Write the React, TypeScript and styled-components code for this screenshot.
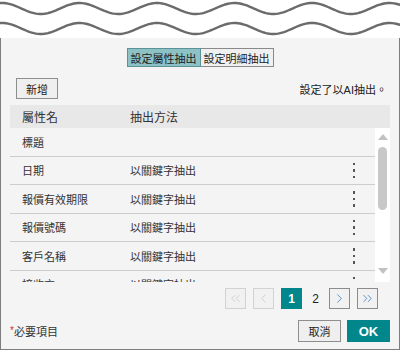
import styled, { createGlobalStyle } from "styled-components"
import { ChevronLeft, ChevronRight, ChevronsLeft, ChevronsRight } from "lucide-react"

const GlobalStyle = createGlobalStyle`
  html, body {
    margin: 0;
    padding: 0;
    background: #ffffff;
  }
  body {
    font-family: "Liberation Sans", "Noto Sans CJK TC", sans-serif;
    color: #222;
  }
`

const rows = [
  { name: "標題", method: "" },
  { name: "日期", method: "以關鍵字抽出" },
  { name: "報價有效期限", method: "以關鍵字抽出" },
  { name: "報價號碼", method: "以關鍵字抽出" },
  { name: "客戶名稱", method: "以關鍵字抽出" },
  { name: "接收方", method: "以關鍵字抽出" },
]

// sine wave points for the torn edge
const wavePath = (cy: number) => {
  const pts: string[] = []
  for (let x = -2; x <= 402; x += 2) {
    const y = cy - 5.5 * Math.cos(((x - 2) / 77.5) * Math.PI * 2)
    pts.push(`${x === -2 ? "M" : "L"}${x},${y.toFixed(2)}`)
  }
  return pts.join(" ")
}

const Kebab = () => (
  <Dots>
    <i />
    <i />
    <i />
  </Dots>
)

const App = () => {
  return (
    <Page>
      <GlobalStyle />
      <Wave>
        <svg width="400" height="38" viewBox="0 0 400 38">
          <path d={wavePath(8.5)} fill="none" stroke="#6b6b6b" strokeWidth="2.4" />
          <path d={wavePath(28.5)} fill="none" stroke="#6b6b6b" strokeWidth="2.4" />
        </svg>
      </Wave>
      <Panel>
        <Tabs>
          <Tab active>設定屬性抽出</Tab>
          <Tab>設定明細抽出</Tab>
        </Tabs>
        <ToolRow>
          <Button>新增</Button>
          <Info>設定了以AI抽出。</Info>
        </ToolRow>
        <Table>
          <HeadRow>
            <Cell>屬性名</Cell>
            <Cell>抽出方法</Cell>
            <Cell />
          </HeadRow>
          <Body>
            <Rows>
              {rows.map((r) => (
                <Row key={r.name}>
                  <Cell>{r.name}</Cell>
                  <Cell>{r.method}</Cell>
                  <Cell>{r.method && <Kebab />}</Cell>
                </Row>
              ))}
            </Rows>
            <Scrollbar>
              <Arrow />
              <Thumb />
              <Arrow down />
            </Scrollbar>
          </Body>
        </Table>
        <Pager>
          <PageBtn disabled>
            <ChevronsLeft size={15} strokeWidth={1.2} />
          </PageBtn>
          <PageBtn disabled>
            <ChevronLeft size={15} strokeWidth={1.2} />
          </PageBtn>
          <PageNum active>1</PageNum>
          <PageNum>2</PageNum>
          <PageBtn>
            <ChevronRight size={15} strokeWidth={1.2} />
          </PageBtn>
          <PageBtn>
            <ChevronsRight size={15} strokeWidth={1.2} />
          </PageBtn>
        </Pager>
        <Footer>
          <Required>
            <span>*</span>必要項目
          </Required>
          <Actions>
            <Button wide>取消</Button>
            <Primary>OK</Primary>
          </Actions>
        </Footer>
      </Panel>
    </Page>
  )
}

const Page = styled.div`
  width: 400px;
  height: 352px;
  overflow: hidden;
  background: #fff;
`

const Wave = styled.div`
  height: 38px;
  svg {
    display: block;
  }
`

const Panel = styled.div`
  box-sizing: border-box;
  width: 400px;
  height: 312px;
  background: #f4f4f4;
  border: 1px solid #7d7d7d;
  border-top: none;
  padding: 10px 9px 0 9px;
  display: flex;
  flex-direction: column;
  font-size: 11px;
`

const Tabs = styled.div`
  display: flex;
  justify-content: center;
`

const Tab = styled.div<{ active?: boolean }>`
  box-sizing: border-box;
  height: 19px;
  padding: 0 3px;
  display: flex;
  align-items: center;
  font-size: 11px;
  color: #1e1e1e;
  background: ${(p) => (p.active ? "#8cc1c5" : "#f0f0f0")};
  border: 1px solid ${(p) => (p.active ? "#5b9297" : "#8a8a8a")};
  & + & {
    border-left: none;
  }
`

const ToolRow = styled.div`
  margin-top: 11px;
  display: flex;
  align-items: center;
  justify-content: space-between;
  padding: 0 3px 0 6px;
`

const Button = styled.button<{ wide?: boolean }>`
  box-sizing: border-box;
  height: ${(p) => (p.wide ? "22px" : "21px")};
  width: ${(p) => (p.wide ? "43px" : "42px")};
  padding: 0;
  font-family: inherit;
  font-size: 11px;
  color: #222;
  background: #efefef;
  border: 1px solid #8e8e8e;
  border-radius: 0;
`

const Info = styled.div`
  font-size: 11px;
  color: #222;
`

const Table = styled.div`
  margin-top: 6px;
  display: flex;
  flex-direction: column;
`

const HeadRow = styled.div`
  height: 23px;
  background: #e8e8e8;
  display: grid;
  grid-template-columns: 120px 1fr 42px;
  align-items: center;
  color: #333;
  font-size: 12px;
`

const Cell = styled.div`
  padding-left: 12px;
  white-space: nowrap;
  &:nth-child(2) {
    padding-left: 0;
  }
  &:nth-child(3) {
    padding-left: 0;
    display: flex;
    justify-content: center;
  }
`

const Body = styled.div`
  height: 154px;
  display: flex;
  overflow: hidden;
`

const Rows = styled.div`
  flex: 1;
  display: flex;
  flex-direction: column;
`

const Row = styled.div`
  flex: none;
  height: 28.5px;
  box-sizing: border-box;
  border-bottom: 1px solid #cdcdcd;
  display: grid;
  grid-template-columns: 120px 1fr 42px;
  align-items: center;
  color: #333;
`

const Dots = styled.div`
  display: flex;
  flex-direction: column;
  gap: 4px;
  i {
    display: block;
    width: 2.5px;
    height: 2.5px;
    background: #555;
  }
`

const Scrollbar = styled.div`
  width: 15px;
  background: #fff;
  display: flex;
  flex-direction: column;
  align-items: center;
  padding: 6px 0 8px;
  box-sizing: border-box;
`

const Arrow = styled.div<{ down?: boolean }>`
  width: 0;
  height: 0;
  border-left: 5px solid transparent;
  border-right: 5px solid transparent;
  ${(p) => (p.down ? "border-top: 6px solid #c2c2c2; margin-top: auto;" : "border-bottom: 6px solid #c2c2c2;")}
`

const Thumb = styled.div`
  margin-top: 7px;
  width: 9px;
  height: 63px;
  border-radius: 5px;
  background: #c8c8c8;
`

const Pager = styled.div`
  margin-top: 6px;
  height: 21px;
  display: flex;
  justify-content: flex-end;
  align-items: center;
  gap: 7px;
  padding-right: 12px;
`

const PageBtn = styled.div<{ disabled?: boolean }>`
  box-sizing: border-box;
  width: 21px;
  height: 21px;
  display: flex;
  align-items: center;
  justify-content: center;
  background: #f1f1f1;
  border: 1px solid ${(p) => (p.disabled ? "#d2d2d2" : "#8c8c8c")};
  color: ${(p) => (p.disabled ? "#c6c6c6" : "#2a74bd")};
`

const PageNum = styled.div<{ active?: boolean }>`
  box-sizing: border-box;
  width: ${(p) => (p.active ? "21px" : "13px")};
  height: 21px;
  display: flex;
  align-items: center;
  justify-content: center;
  font-size: 12px;
  font-weight: ${(p) => (p.active ? "bold" : "normal")};
  color: ${(p) => (p.active ? "#fff" : "#222")};
  background: ${(p) => (p.active ? "#00868b" : "transparent")};
`

const Footer = styled.div`
  margin-top: 11px;
  display: flex;
  align-items: center;
  justify-content: space-between;
`

const Required = styled.div`
  font-size: 11px;
  color: #333;
  span {
    color: #c0392b;
    font-size: 10px;
    vertical-align: 2px;
  }
`

const Actions = styled.div`
  display: flex;
  gap: 6px;
`

const Primary = styled.button`
  box-sizing: border-box;
  width: 43px;
  height: 22px;
  padding: 0;
  border: none;
  border-radius: 0;
  background: #00868b;
  color: #fff;
  font-family: inherit;
  font-weight: bold;
  font-size: 13px;
`

export default App
